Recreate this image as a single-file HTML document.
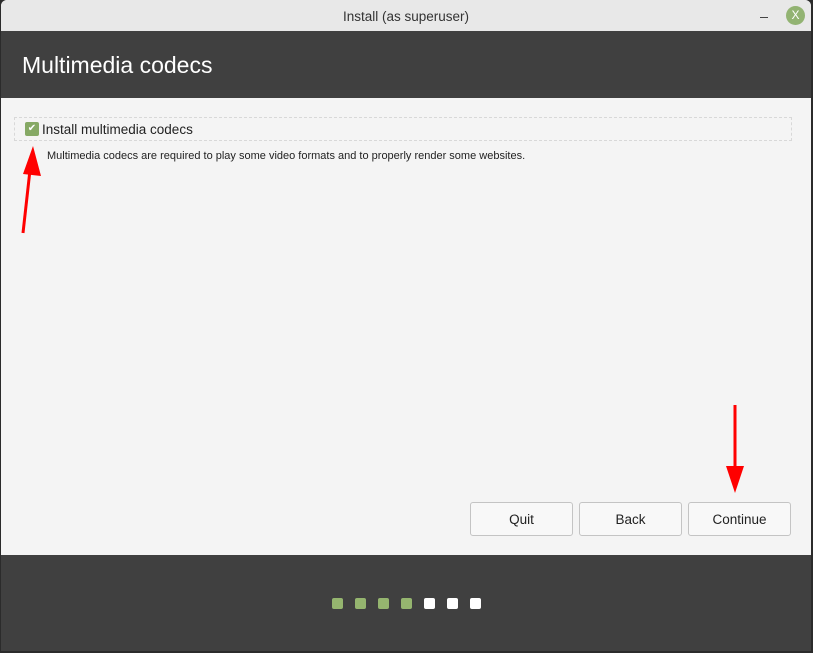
<!DOCTYPE html>
<html><head><style>
body{margin:0;width:813px;height:653px;background:#2b2b2b;font-family:"Liberation Sans",sans-serif;position:relative;overflow:hidden}
.win{position:absolute;left:1px;top:0;width:810px;height:651px;background:#f4f4f4;border-radius:6px 6px 0 0;overflow:hidden}
.tb{position:absolute;left:0;top:0;width:810px;height:31px;background:#e8e8e8;text-align:center;line-height:33px;font-size:13.5px;color:#333}
.hd{position:absolute;left:0;top:31px;width:810px;height:67px;background:#404040;color:#fff;font-size:23px}
.ft{position:absolute;left:0;top:555px;width:810px;height:96px;background:#404040}
.btn{position:absolute;top:502px;width:101px;height:32px;border:1px solid #c4c4c4;border-radius:3px;background:#f8f8f8;font-size:13.5px;text-align:center;line-height:33px;color:#222}
.dot{position:absolute;top:598px;width:11px;height:11px;border-radius:2px;background:#fff}
.g{background:#95b56f}
</style></head><body>
<div class="win">
<div class="tb">Install (as superuser)</div>
<div style="position:absolute;left:759px;top:17px;width:8px;height:1px;background:#444"></div>
<div style="position:absolute;left:785px;top:6px;width:19px;height:19px;border-radius:50%;background:#92b372;color:#fff;font-size:12px;line-height:19px;text-align:center">X</div>
<div class="hd"><div style="position:absolute;left:21px;top:21px">Multimedia codecs</div></div>
<div style="position:absolute;left:13px;top:117px;width:776px;height:22px;border:1px dashed #d8d8d8"></div>
<div style="position:absolute;left:24px;top:122px;width:14px;height:14px;border-radius:2px;background:#86a965;color:#fff;font-size:10px;line-height:14px;text-align:center">✔</div>
<div style="position:absolute;left:41px;top:122px;font-size:13.5px;color:#222">Install multimedia codecs</div>
<div style="position:absolute;left:46px;top:150px;font-size:11px;color:#222">Multimedia codecs are required to play some video formats and to properly render some websites.</div>
<div class="btn" style="left:469px">Quit</div>
<div class="btn" style="left:578px">Back</div>
<div class="btn" style="left:687px">Continue</div>
<div class="ft"></div>
</div>
<div class="dot g" style="left:332px"></div><div class="dot g" style="left:355px"></div><div class="dot g" style="left:378px"></div><div class="dot g" style="left:401px"></div><div class="dot" style="left:424px"></div><div class="dot" style="left:447px"></div><div class="dot" style="left:470px"></div>
<svg width="813" height="653" style="position:absolute;left:0;top:0">
<line x1="23" y1="233" x2="30" y2="170" stroke="#f00" stroke-width="3"/>
<polygon points="33,146 23,174 41,176" fill="#f00"/>
<line x1="735" y1="405" x2="735" y2="470" stroke="#f00" stroke-width="3"/>
<polygon points="735,493 726,466 744,466" fill="#f00"/>
</svg>
</body></html>
